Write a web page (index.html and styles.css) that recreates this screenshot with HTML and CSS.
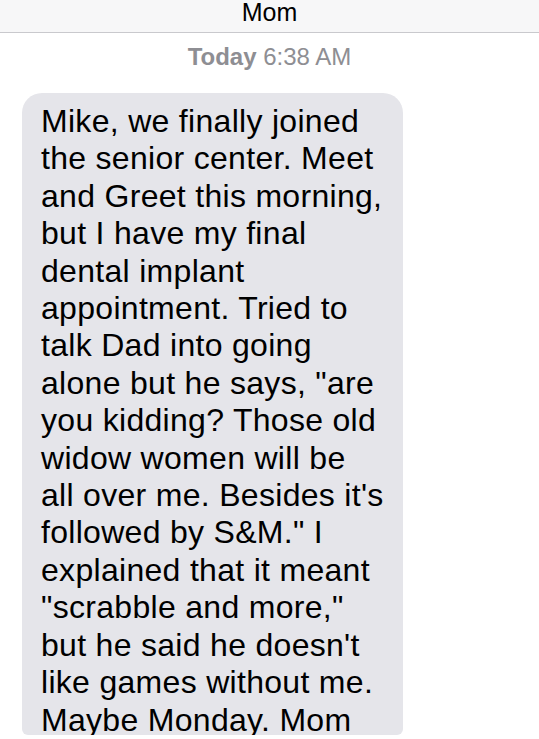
FILE: index.html
```html
<!DOCTYPE html>
<html lang="en">
<head>
<meta charset="utf-8">
<title>Mom</title>
<link rel="stylesheet" href="styles.css">
</head>
<body>
<header class="nav">Mom</header>
<div class="stamp"><span class="day">Today</span> 6:38 AM</div>
<div class="thread">
  <div class="bubble">Mike, we finally joined<br>the senior center. Meet<br>and Greet this morning,<br>but I have my final<br>dental implant<br>appointment. Tried to<br>talk Dad into going<br>alone but he says, "are<br>you kidding? Those old<br>widow women will be<br>all over me. Besides it's<br>followed by S&amp;M." I<br>explained that it meant<br>"scrabble and more,"<br>but he said he doesn't<br>like games without me.<br>Maybe Monday. Mom</div>
</div>
</body>
</html>
```
FILE: styles.css
```css
html, body {
  margin: 0;
  padding: 0;
  height: 739px;
  overflow: hidden;
  background: #ffffff;
  font-family: "Liberation Sans", Arial, sans-serif;
}
.nav {
  height: 32px;
  background: #f7f7f8;
  border-bottom: 1px solid #c9c9cd;
  text-align: center;
  font-size: 25px;
  line-height: 25px;
  color: #000;
}
.stamp {
  margin-top: 12px;
  text-align: center;
  font-size: 24px;
  line-height: 24px;
  color: #8e8e93;
}
.day {
  font-weight: bold;
}
.thread {
  padding-left: 22px;
  margin-top: 24px;
}
.bubble {
  width: 381px;
  height: 642px;
  box-sizing: border-box;
  overflow: hidden;
  background: #e5e5ea;
  border-radius: 20px 20px 6px 6px;
  padding: 10px 0 0 19px;
  font-size: 32px;
  line-height: 37.4px;
  letter-spacing: 0.3px;
  color: #000;
  white-space: nowrap;
}
```
